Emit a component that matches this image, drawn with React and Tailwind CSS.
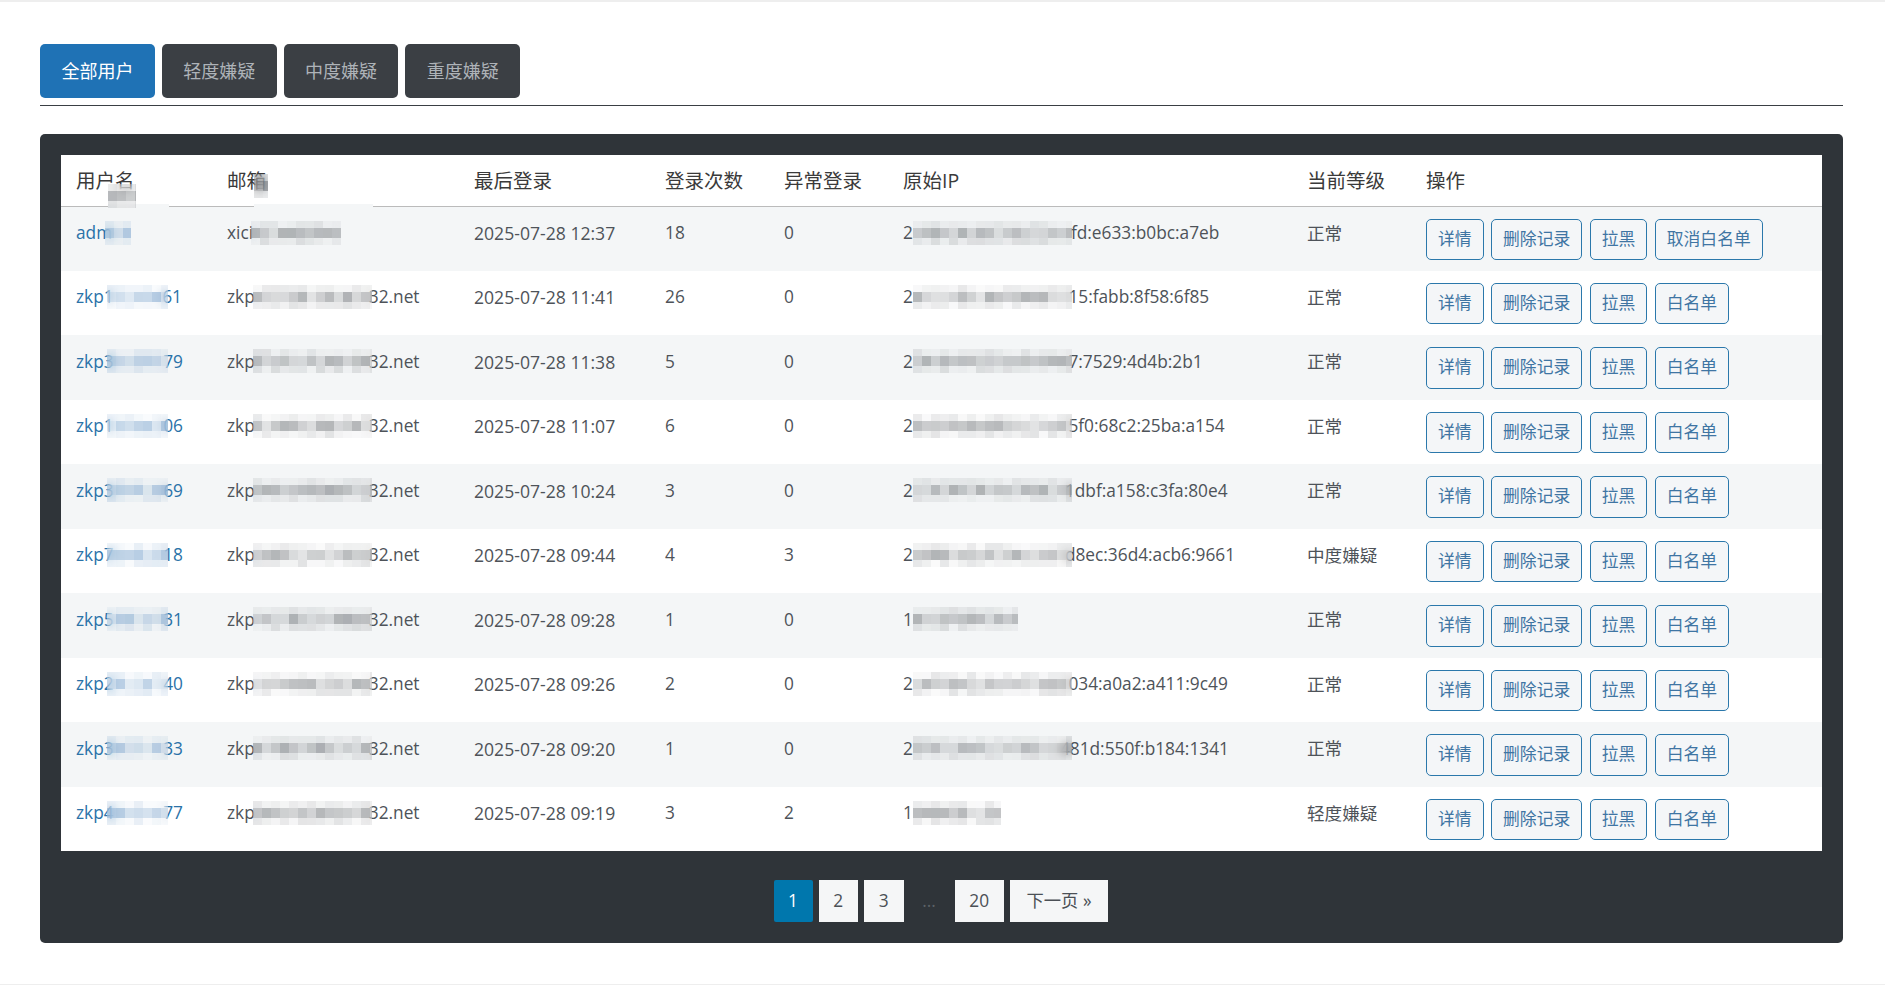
import React from "react";

const font = { fontFamily: '"Open Sans", "Noto Sans CJK SC", sans-serif' };

const users = [
  { pre: "adm", nameW: 26, nameL: -7, nameR: 0, suf: "", mailPre: "xici", mailW: 90, mailL: -2, mailR: 0, mailSuf: "", time: "12:37", count: 18, bad: 0, ipPre: "2", ipW: 159, ipCut: 1, ip: "fd:e633:b0bc:a7eb", level: "正常", white: "取消白名单" },
  { pre: "zkp1", nameW: 61, nameL: -7, nameR: -5.5, suf: "61", mailPre: "zkp", mailW: 119, mailL: -2, mailR: -3, mailSuf: "32.net", time: "11:41", count: 26, bad: 0, ipPre: "2", ipW: 159, ipCut: 3.5, ip: "15:fabb:8f58:6f85", level: "正常", white: "白名单" },
  { pre: "zkp3", nameW: 61, nameL: -7, nameR: -4.5, suf: "79", mailPre: "zkp", mailW: 119, mailL: -2, mailR: -3, mailSuf: "32.net", time: "11:38", count: 5, bad: 0, ipPre: "2", ipW: 159, ipCut: 3.5, ip: "7:7529:4d4b:2b1", level: "正常", white: "白名单" },
  { pre: "zkp1", nameW: 61, nameL: -7, nameR: -4.5, suf: "06", mailPre: "zkp", mailW: 119, mailL: -2, mailR: -3, mailSuf: "32.net", time: "11:07", count: 6, bad: 0, ipPre: "2", ipW: 159, ipCut: 3.5, ip: "5f0:68c2:25ba:a154", level: "正常", white: "白名单" },
  { pre: "zkp3", nameW: 61, nameL: -7, nameR: -4.5, suf: "69", mailPre: "zkp", mailW: 119, mailL: -2, mailR: -3, mailSuf: "32.net", time: "10:24", count: 3, bad: 0, ipPre: "2", ipW: 159, ipCut: 7, ip: "1dbf:a158:c3fa:80e4", level: "正常", white: "白名单" },
  { pre: "zkp7", nameW: 61, nameL: -7, nameR: -4.5, suf: "18", mailPre: "zkp", mailW: 119, mailL: -2, mailR: -3, mailSuf: "32.net", time: "09:44", count: 4, bad: 3, ipPre: "2", ipW: 159, ipCut: 7, ip: "d8ec:36d4:acb6:9661", level: "中度嫌疑", white: "白名单" },
  { pre: "zkp5", nameW: 61, nameL: -7, nameR: -4.5, suf: "31", mailPre: "zkp", mailW: 119, mailL: -2, mailR: -3, mailSuf: "32.net", time: "09:28", count: 1, bad: 0, ipPre: "1", ipW: 105, ipCut: 0, ip: "", level: "正常", white: "白名单" },
  { pre: "zkp2", nameW: 61, nameL: -7, nameR: -4.5, suf: "40", mailPre: "zkp", mailW: 119, mailL: -2, mailR: -3, mailSuf: "32.net", time: "09:26", count: 2, bad: 0, ipPre: "2", ipW: 159, ipCut: 3.5, ip: "034:a0a2:a411:9c49", level: "正常", white: "白名单" },
  { pre: "zkp3", nameW: 61, nameL: -7, nameR: -4.5, suf: "33", mailPre: "zkp", mailW: 119, mailL: -2, mailR: -3, mailSuf: "32.net", time: "09:20", count: 1, bad: 0, ipPre: "2", ipW: 159, ipCut: 12, ip: "481d:550f:b184:1341", level: "正常", white: "白名单" },
  { pre: "zkp4", nameW: 61, nameL: -7, nameR: -4.5, suf: "77", mailPre: "zkp", mailW: 119, mailL: -2, mailR: -3, mailSuf: "32.net", time: "09:19", count: 3, bad: 2, ipPre: "1", ipW: 88, ipCut: 0, ip: "", level: "轻度嫌疑", white: "白名单" },
];

// the picture has these values pixelated out, so draw a little mosaic over the text
function Mosaic({ width, seed, rgb = "120,124,128", left = 0, right = 0 }) {
  const cols = Math.ceil(width / 9);
  const rnd = (i) => {
    const v = Math.sin(seed * 37.7 + i * 12.9898) * 43758.5453;
    return v - Math.floor(v);
  };
  return (
    <span
      className="relative z-10 -mt-[3px] inline-flex h-[24px] overflow-hidden align-middle backdrop-blur-[5px]"
      style={{ width, marginLeft: left, marginRight: right }}
    >
      {Array.from({ length: cols }).map((_, i) => (
        <span key={i} className="flex h-full w-[9px] shrink-0 flex-col blur-[0.6px]">
          <span className="h-[7px]" style={{ background: `rgba(${rgb},${0.04 + rnd(i) * 0.14})` }} />
          <span className="h-[10px]" style={{ background: `rgba(${rgb},${0.2 + rnd(i + 50) * 0.38})` }} />
          <span className="h-[7px]" style={{ background: `rgba(${rgb},${0.04 + rnd(i + 90) * 0.18})` }} />
        </span>
      ))}
    </span>
  );
}

function ActionBtn({ children }) {
  return (
    <button className="h-[41.5px] rounded-[5px] border border-[#2b78ab] bg-[#f4f6f8] px-[11px] text-[16.8px] leading-none text-[#3f75a3]">
      {children}
    </button>
  );
}

function Tab({ children, active }) {
  return (
    <button
      className={
        active
          ? "h-[54px] w-[114.8px] rounded-[5px] bg-[#1f72b5] text-[18px] text-white"
          : "h-[54px] w-[114.8px] rounded-[5px] bg-[#3b3f44] text-[18px] text-[#aeb3b8]"
      }
    >
      {children}
    </button>
  );
}

function PageBtn({ children, w, active }) {
  return (
    <a
      className={
        active
          ? "flex h-[42px] items-center justify-center rounded-[2px] bg-[#0077ad] pt-[1px] text-[17.3px] text-white"
          : "flex h-[42px] items-center justify-center bg-[#f5f6f7] pt-[1px] text-[17.3px] text-[#4b5056]"
      }
      style={{ width: w }}
    >
      {children}
    </a>
  );
}

export default function App() {
  return (
    <div className="h-[989px] overflow-hidden bg-white text-[17.3px] text-[#4e5359]" style={font}>
      <div className="h-[2px] bg-[#eeeeee]" />

      <div className="pl-10 pr-[42px] pt-[42px]">
        {/* 分类标签 */}
        <div className="flex h-[62px] gap-[7px] border-b border-[#3a3f44]">
          <Tab active>全部用户</Tab>
          <Tab>轻度嫌疑</Tab>
          <Tab>中度嫌疑</Tab>
          <Tab>重度嫌疑</Tab>
        </div>

        {/* 用户表格 */}
        <div className="mt-[28px] h-[808.5px] rounded-[5px] bg-[#2f3439] px-[21px] pt-[21px]">
          <table className="w-full table-fixed bg-white text-left">
            <colgroup>
              <col className="w-[151px]" />
              <col className="w-[247px]" />
              <col className="w-[191px]" />
              <col className="w-[119px]" />
              <col className="w-[119px]" />
              <col className="w-[404px]" />
              <col className="w-[119px]" />
              <col />
            </colgroup>
            <thead>
              <tr className="h-[51px] border-b border-[#bbbbbb] text-[19.5px] text-[#3a3a3a]">
                <th className="relative px-[15px] pt-[1px] font-normal">
                  用户名
                  <span className="absolute left-[47px] top-[26px]">
                    <Mosaic width={28} seed={3} rgb="90,95,100" />
                  </span>
                  <span className="absolute -bottom-[3px] left-[47px] h-[5px] w-[61px] bg-[#f4f6f7]" />
                </th>
                <th className="relative px-[15px] pt-[1px] font-normal">
                  邮箱
                  <span className="absolute left-[42px] top-[16px]">
                    <Mosaic width={14} seed={8} rgb="90,95,100" />
                  </span>
                  <span className="absolute -bottom-[3px] left-[42px] h-[5px] w-[119px] bg-[#f4f6f7]" />
                </th>
                <th className="px-[15px] pt-[1px] font-normal">最后登录</th>
                <th className="px-[15px] pt-[1px] font-normal">登录次数</th>
                <th className="px-[15px] pt-[1px] font-normal">异常登录</th>
                <th className="px-[15px] pt-[1px] font-normal">原始IP</th>
                <th className="px-[15px] pt-[1px] font-normal">当前等级</th>
                <th className="px-[15px] pt-[1px] font-normal">操作</th>
              </tr>
            </thead>
            <tbody>
              {users.map((u, i) => (
                <tr key={i} className="h-[64.5px] odd:bg-[#f4f6f7]">
                  <td className="whitespace-nowrap px-[15px] pt-[13.5px] align-top leading-[26px] text-[#2a72a8]">
                    {u.pre}
                    <Mosaic width={u.nameW} seed={i + 1} rgb="125,165,205" left={u.nameL} right={u.nameR} />
                    {u.suf}
                  </td>
                  <td className="whitespace-nowrap px-[15px] pt-[13.5px] align-top leading-[26px]">
                    {u.mailPre}
                    <Mosaic width={u.mailW} seed={i + 20} left={u.mailL} right={u.mailR} />
                    {u.mailSuf}
                  </td>
                  <td className="px-[15px] pt-[13.5px] align-top text-[17.6px] leading-[26px]">2025-07-28 {u.time}</td>
                  <td className="px-[15px] pt-[13.5px] align-top leading-[26px]">{u.count}</td>
                  <td className="px-[15px] pt-[13.5px] align-top leading-[26px]">{u.bad}</td>
                  <td className="whitespace-nowrap px-[15px] pt-[13.5px] align-top leading-[26px]">
                    {u.ipPre}
                    <Mosaic width={u.ipW} seed={i + 40} right={-u.ipCut} />
                    {u.ip}
                  </td>
                  <td className="px-[15px] pt-[13px] align-top text-[17.6px] leading-[26px]">{u.level}</td>
                  <td className="px-[15px] pt-[12px] align-top">
                    <div className="flex gap-[7.5px]">
                      <ActionBtn>详情</ActionBtn>
                      <ActionBtn>删除记录</ActionBtn>
                      <ActionBtn>拉黑</ActionBtn>
                      <ActionBtn>{u.white}</ActionBtn>
                    </div>
                  </td>
                </tr>
              ))}
            </tbody>
          </table>

          {/* 分页 */}
          <div className="mt-[28.5px] flex justify-center gap-[6px] pr-[1.5px]">
            <PageBtn w={39} active>1</PageBtn>
            <PageBtn w={39.5}>2</PageBtn>
            <PageBtn w={39.5}>3</PageBtn>
            <span className="flex h-[42px] w-[39px] items-center justify-center text-[#5c6167]">...</span>
            <PageBtn w={49.5}>20</PageBtn>
            <PageBtn w={98}>下一页 »</PageBtn>
          </div>
        </div>
      </div>

      <div className="mt-[41px] h-[1px] bg-[#eeeeee]" />
    </div>
  );
}
